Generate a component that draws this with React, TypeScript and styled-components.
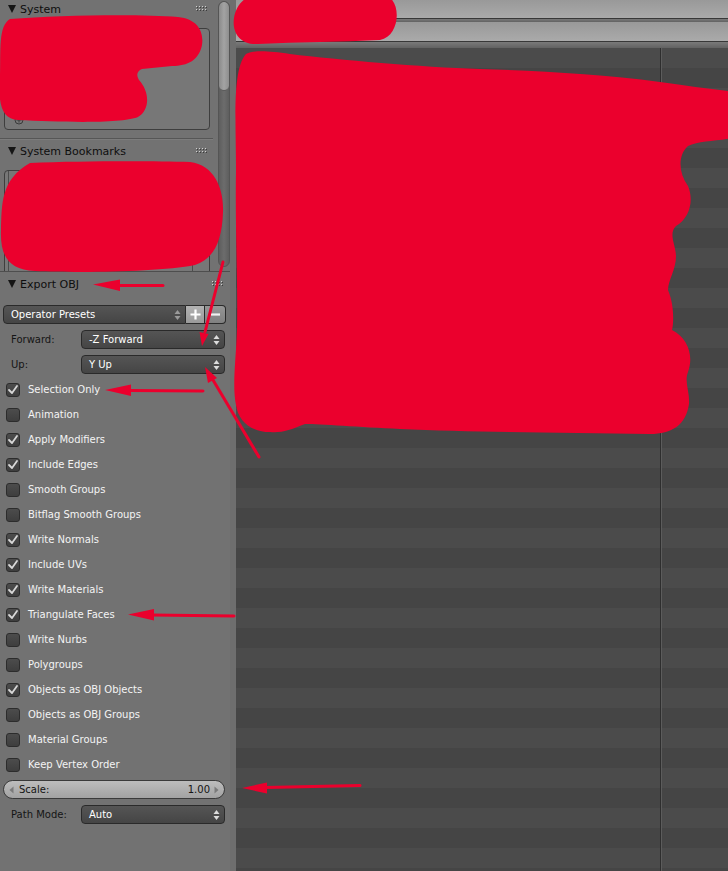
import React from "react";
import styled, { createGlobalStyle } from "styled-components";

const GlobalStyle = createGlobalStyle`
  html, body { margin: 0; padding: 0; background: #727272; }
  body { font-family: "DejaVu Sans", "Liberation Sans", sans-serif; }
  * { box-sizing: border-box; }
`;

const RED = "#eb002d";

const Screen = styled.div`
  position: relative;
  width: 728px;
  height: 871px;
  overflow: hidden;
  display: flex;
  background: #727272;
`;

const Sidebar = styled.div`
  width: 230px;
  flex: none;
  display: flex;
  flex-direction: column;
  background: #727272;
`;

const TopRegion = styled.div`
  height: 272px;
  flex: none;
  display: flex;
  overflow: hidden;
  border-bottom: 1px solid #4e4e4e;
`;

const PanelsCol = styled.div`
  width: 214px;
  flex: none;
  display: flex;
  flex-direction: column;
  overflow: hidden;
`;

const ScrollCol = styled.div`
  width: 16px;
  flex: none;
  padding: 1px 0 0 4px;
`;

const ScrollTrack = styled.div`
  width: 12px;
  height: 266px;
  border-radius: 6px;
  background: linear-gradient(to right, #5e5e5e, #6c6c6c 50%, #5e5e5e);
  border: 1px solid #555;
  overflow: hidden;
`;

const ScrollThumb = styled.div`
  width: 100%;
  height: 89px;
  border-radius: 6px;
  background: linear-gradient(to right, #8a8a8a, #a3a3a3 50%, #8e8e8e);
  border-bottom: 1px solid #5a5a5a;
`;

const PanelHeader = styled.div<{ $h: number; $mt?: number }>`
  height: ${(p) => p.$h}px;
  margin-top: ${(p) => p.$mt ?? 0}px;
  flex: none;
  display: flex;
  align-items: center;
  padding-left: 8px;
  padding-right: 7px;
  font-size: 11px;
  color: #0e0e0e;
`;

const Triangle = styled.span`
  width: 0;
  height: 0;
  border-left: 4.5px solid transparent;
  border-right: 4.5px solid transparent;
  border-top: 8px solid #151515;
  margin-right: 4px;
  flex: none;
`;

const HeaderTitle = styled.span`
  flex: 1;
  white-space: nowrap;
`;

const GripBox = styled.svg`
  flex: none;
`;

const Grip = () => (
  <GripBox width="11" height="6" viewBox="0 0 11 6">
    {[0, 1].map((r) =>
      [0, 1, 2, 3].map((c) => (
        <g key={`${r}-${c}`}>
          <rect x={c * 3 + 1} y={r * 3 + 1} width="1" height="1" fill="#3c3c3c" />
          <rect x={c * 3} y={r * 3} width="1" height="1" fill="#d0d0d0" />
        </g>
      ))
    )}
  </GripBox>
);

const ListBox = styled.div<{ $h: number; $mt: number }>`
  position: relative;
  margin: ${(p) => p.$mt}px 0 0 4px;
  width: 206px;
  height: ${(p) => p.$h}px;
  flex: none;
  border: 1px solid #3e3e3e;
  border-radius: 4px;
  background: #777777;
`;

const BoxColumns = styled.div`
  position: absolute;
  inset: 0;
  display: grid;
  grid-template-columns: 4px 1fr 16px;
  & > div { border-right: 1px solid #4c4c4c; }
  & > div:last-child { border-right: none; }
`;

const AddIcon = styled.svg`
  position: absolute;
  left: 9px;
  bottom: 4px;
`;

const Separator = styled.div<{ $mt: number }>`
  margin-top: ${(p) => p.$mt}px;
  width: 213px;
  height: 1px;
  flex: none;
  background: #565656;
  box-shadow: 0 1px 0 #7c7c7c;
`;

const ExportBody = styled.div`
  display: flex;
  flex-direction: column;
  padding: 6px 5px 0 3px;
`;

const Row = styled.div`
  height: 25px;
  flex: none;
  display: flex;
  align-items: center;
`;

const WidgetBox = styled.div<{ $w?: number; $grow?: boolean }>`
  height: 19px;
  ${(p) => (p.$grow ? "flex: 1;" : `width: ${p.$w}px; flex: none;`)}
  display: flex;
  align-items: center;
  border: 1px solid #2a2a2a;
  border-radius: 4px;
  background: linear-gradient(to bottom, #555555, #454545);
  color: #ffffff;
  font-size: 10px;
  padding: 0 4px 0 7px;
  white-space: nowrap;
`;

const PresetBox = styled(WidgetBox)`
  border-radius: 4px 0 0 4px;
`;

const IconButton = styled.div<{ $light?: boolean; $last?: boolean }>`
  width: ${(p) => (p.$last ? 21 : 19)}px;
  height: 19px;
  flex: none;
  display: flex;
  align-items: center;
  justify-content: center;
  border: 1px solid #2a2a2a;
  border-left: none;
  border-radius: ${(p) => (p.$last ? "0 4px 4px 0" : "0")};
  background: ${(p) =>
    p.$light
      ? "linear-gradient(to bottom, #b2b2b2, #9a9a9a)"
      : "linear-gradient(to bottom, #969696, #808080)"};
`;

const WidgetText = styled.span`
  flex: 1;
`;

const FieldLabel = styled.span`
  width: 78px;
  flex: none;
  padding-left: 8px;
  font-size: 10px;
  color: #151515;
  white-space: nowrap;
`;

const Check = styled.div`
  width: 14px;
  height: 14px;
  flex: none;
  margin-left: 3px;
  border: 1px solid #2c2c2c;
  border-radius: 3px;
  background: linear-gradient(to bottom, #4c4c4c, #3e3e3e);
  display: flex;
  align-items: center;
  justify-content: center;
`;

const CheckLabel = styled.span`
  margin-left: 8px;
  font-size: 10px;
  color: #f4f4f4;
  white-space: nowrap;
`;

const Slider = styled.div`
  flex: 1;
  height: 19px;
  display: flex;
  align-items: center;
  border: 1px solid #3a3a3a;
  border-radius: 10px;
  background: linear-gradient(to bottom, #bdbdbd, #a2a2a2);
  font-size: 10px;
  color: #141414;
  padding: 0 5px;
`;

const SliderLabel = styled.span`
  flex: 1;
  margin-left: 5px;
`;

const SliderValue = styled.span`
  margin-right: 4px;
`;

const Divider = styled.div`
  width: 6px;
  flex: none;
  background: #6e6e6e;
`;

const Main = styled.div`
  flex: 1;
  display: flex;
  flex-direction: column;
  overflow: hidden;
`;

const HeaderStrip = styled.div<{ $h: number }>`
  height: ${(p) => p.$h}px;
  flex: none;
  background: linear-gradient(to bottom, #999999, #aaaaaa);
  border-bottom: 1px solid #383838;
`;

const StripGap = styled.div<{ $h: number }>`
  height: ${(p) => p.$h}px;
  flex: none;
  background: linear-gradient(to bottom, #7a7a7a, #626262);
`;

const FileRow = styled.div<{ $dark: boolean }>`
  height: 20px;
  flex: none;
  display: flex;
  background: ${(p) => (p.$dark ? "#454545" : "#4b4b4b")};
`;

const NameCell = styled.div`
  width: 424px;
  flex: none;
`;

const SideCell = styled.div`
  flex: 1;
  border-left: 1px solid #2e2e2e;
  box-shadow: inset 1px 0 0 #5c5c5c;
`;

const Overlay = styled.svg`
  position: absolute;
  left: 0;
  top: 0;
  pointer-events: none;
`;

const UpDown = ({ color = "#dcdcdc" }: { color?: string }) => (
  <svg width="7" height="12" viewBox="0 0 7 12">
    <polygon points="0.5,5 6.5,5 3.5,1" fill={color} />
    <polygon points="0.5,7 6.5,7 3.5,11" fill={color} />
  </svg>
);

const CheckMark = () => (
  <svg width="12" height="12" viewBox="0 0 12 12">
    <polyline points="2,6 5,9 10,2" fill="none" stroke="#d8d8d8" strokeWidth="1.8" strokeLinejoin="round" strokeLinecap="round" />
  </svg>
);

const options: [string, boolean][] = [
  ["Selection Only", true],
  ["Animation", false],
  ["Apply Modifiers", true],
  ["Include Edges", true],
  ["Smooth Groups", false],
  ["Bitflag Smooth Groups", false],
  ["Write Normals", true],
  ["Include UVs", true],
  ["Write Materials", true],
  ["Triangulate Faces", true],
  ["Write Nurbs", false],
  ["Polygroups", false],
  ["Objects as OBJ Objects", true],
  ["Objects as OBJ Groups", false],
  ["Material Groups", false],
  ["Keep Vertex Order", false],
];

const Arrow = ({ x1, y1, x2, y2, hx, hy, b1, b2 }: { x1: number; y1: number; x2: number; y2: number; hx: number; hy: number; b1: [number, number]; b2: [number, number] }) => (
  <g>
    <line x1={x1} y1={y1} x2={x2} y2={y2} stroke={RED} strokeWidth="3" strokeLinecap="round" />
    <polygon points={`${hx},${hy} ${b1[0]},${b1[1]} ${b2[0]},${b2[1]}`} fill={RED} />
  </g>
);

const Scribbles = () => (
  <Overlay width="728" height="871" viewBox="0 0 728 871">
    <path
      fill={RED}
      d="M 10 19 C 60 15, 140 14, 178 17 C 198 19, 204 32, 202 45 C 199 60, 188 66, 172 66 L 142 69 C 137 71, 136 75, 139 80 C 150 92, 150 110, 138 117 C 120 124, 60 122, 18 120 C 2 119, -2 104, 0 80 C 1 50, -2 26, 10 19 Z"
    />
    <path
      fill={RED}
      d="M 30 163 C 80 161, 150 161, 190 162 C 215 165, 224 190, 223 212 C 222 240, 215 258, 195 265 C 160 272, 80 273, 35 271 C 8 270, 0 255, 1 230 C 2 205, 0 180, 30 163 Z"
    />
    <path
      fill={RED}
      d="M 258 -5 L 382 -5 C 402 -5, 402 36, 380 40 C 340 42, 300 42, 258 44 C 238 45, 232 30, 234 18 C 236 5, 245 -5, 258 -5 Z"
    />
    <path
      fill={RED}
      d="M 246 54 C 255 50, 268 51, 290 54 C 340 60, 420 67, 480 69 C 540 71, 600 74, 660 82 C 690 86, 715 90, 740 92 L 740 136 C 720 142, 700 140, 688 146 C 678 155, 678 172, 688 186 C 694 200, 690 218, 676 226 C 668 234, 676 245, 676 256 C 676 270, 668 280, 668 290 C 674 304, 674 322, 672 330 C 688 338, 694 356, 688 372 C 684 382, 690 392, 689 404 C 686 425, 672 434, 650 434 C 560 433, 470 432, 400 429 C 360 427, 320 424, 305 424 C 290 430, 282 433, 270 432 C 250 432, 238 420, 236 405 C 232 385, 236 360, 237 330 C 238 280, 235 230, 236 170 C 236 120, 232 70, 246 54 Z"
    />
    <Arrow x1={163} y1={285.5} x2={118} y2={285.5} hx={93} hy={284.5} b1={[120, 279.5]} b2={[120, 291]} />
    <Arrow x1={223} y1={262} x2={205} y2={332} hx={202} hy={346} b1={[199.5, 332]} b2={[208.5, 334]} />
    <Arrow x1={259} y1={457} x2={213} y2={380} hx={205} hy={367} b1={[208, 383]} b2={[217, 378]} />
    <Arrow x1={203} y1={391} x2={130} y2={390.5} hx={105} hy={390} b1={[131, 384.5]} b2={[131, 396]} />
    <Arrow x1={234} y1={616} x2={152} y2={615} hx={128} hy={614.5} b1={[154, 609]} b2={[154, 620.5]} />
    <Arrow x1={360} y1={785.5} x2={265} y2={787.5} hx={242} hy={788} b1={[267, 782.5]} b2={[267, 793.5]} />
  </Overlay>
);

export default function App() {
  const rows = Array.from({ length: 42 }, (_, i) => i);
  return (
    <Screen>
      <GlobalStyle />
      <Sidebar>
        <TopRegion>
          <PanelsCol>
            <PanelHeader $h={18}>
              <Triangle />
              <HeaderTitle>System</HeaderTitle>
              <Grip />
            </PanelHeader>
            <ListBox $h={102} $mt={10}>
              <AddIcon width="10" height="10" viewBox="0 0 10 10">
                <circle cx="5" cy="5" r="4" fill="none" stroke="#3a3a3a" strokeWidth="1" />
                <path d="M5 2.5 V7.5 M2.5 5 H7.5" stroke="#3a3a3a" strokeWidth="1" />
              </AddIcon>
            </ListBox>
            <Separator $mt={8} />
            <PanelHeader $h={20} $mt={2}>
              <Triangle />
              <HeaderTitle>System Bookmarks</HeaderTitle>
              <Grip />
            </PanelHeader>
            <ListBox $h={112} $mt={9}>
              <BoxColumns>
                <div />
                <div />
                <div />
              </BoxColumns>
            </ListBox>
          </PanelsCol>
          <ScrollCol>
            <ScrollTrack>
              <ScrollThumb />
            </ScrollTrack>
          </ScrollCol>
        </TopRegion>
        <PanelHeader $h={24}>
          <Triangle />
          <HeaderTitle>Export OBJ</HeaderTitle>
          <Grip />
        </PanelHeader>
        <ExportBody>
          <Row>
            <PresetBox $w={183}>
              <WidgetText>Operator Presets</WidgetText>
              <UpDown color="#9a9a9a" />
            </PresetBox>
            <IconButton $light>
              <svg width="11" height="11" viewBox="0 0 11 11">
                <path d="M5.5 0.5 V10.5 M0.5 5.5 H10.5" stroke="#ffffff" strokeWidth="2.2" />
              </svg>
            </IconButton>
            <IconButton $last>
              <svg width="11" height="11" viewBox="0 0 11 11">
                <path d="M1 5.5 H10" stroke="#f2f2f2" strokeWidth="2.2" />
              </svg>
            </IconButton>
          </Row>
          <Row>
            <FieldLabel>Forward:</FieldLabel>
            <WidgetBox $grow>
              <WidgetText>-Z Forward</WidgetText>
              <UpDown />
            </WidgetBox>
          </Row>
          <Row>
            <FieldLabel>Up:</FieldLabel>
            <WidgetBox $grow>
              <WidgetText>Y Up</WidgetText>
              <UpDown />
            </WidgetBox>
          </Row>
          {options.map(([label, checked]) => (
            <Row key={label}>
              <Check>{checked && <CheckMark />}</Check>
              <CheckLabel>{label}</CheckLabel>
            </Row>
          ))}
          <Row>
            <Slider>
              <svg width="5" height="8" viewBox="0 0 5 8">
                <polygon points="4.5,0.5 4.5,7.5 0.5,4" fill="#7a7a7a" />
              </svg>
              <SliderLabel>Scale:</SliderLabel>
              <SliderValue>1.00</SliderValue>
              <svg width="5" height="8" viewBox="0 0 5 8">
                <polygon points="0.5,0.5 0.5,7.5 4.5,4" fill="#7a7a7a" />
              </svg>
            </Slider>
          </Row>
          <Row>
            <FieldLabel>Path Mode:</FieldLabel>
            <WidgetBox $grow>
              <WidgetText>Auto</WidgetText>
              <UpDown />
            </WidgetBox>
          </Row>
        </ExportBody>
      </Sidebar>
      <Divider />
      <Main>
        <HeaderStrip $h={19} />
        <StripGap $h={3} />
        <HeaderStrip $h={20} />
        <StripGap $h={6} />
        {rows.map((i) => (
          <FileRow key={i} $dark={i % 2 === 1}>
            <NameCell />
            <SideCell />
          </FileRow>
        ))}
      </Main>
      <Scribbles />
    </Screen>
  );
}
